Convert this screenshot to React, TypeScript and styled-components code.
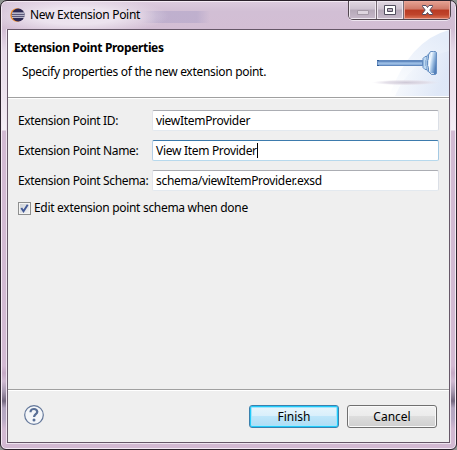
import React from "react";
import styled, { createGlobalStyle } from "styled-components";

const GlobalStyle = createGlobalStyle`
  * { box-sizing: border-box; }
  body { margin: 0; background: #8d938f; overflow: hidden; }
`;

const Window = styled.div`
  width: 457px;
  height: 450px;
  display: flex;
  flex-direction: column;
  padding: 0 6px 6px;
  border: 1px solid #2b222c;
  border-radius: 7px 7px 6px 6px;
  box-shadow: inset 0 0 0 1px #f4eaf4;
  background: linear-gradient(180deg, #dccbdd 0, #d2bdd4 28px, #e6dae8 50px, #eee5ef 100px, #f4eef5 129px, #d2bad3 130px, #d3bad3 365px, #c5a9c5 372px, #d0bad2 380px, #a99ab2 390px, #74677f 400px, #b3a5c0 407px, #b8a9c4 418px, #d2b9d2 428px, #d2b9d2 100%);
  font-family: "Noto Sans", "Open Sans", sans-serif;
  font-size: 12px;
  color: #000;
`;

const TitleBar = styled.header`
  position: relative;
  height: 27px;
  flex: none;
  display: flex;
  align-items: flex-start;
  margin: 1px -5px 0;
  padding-left: 8px;
  border-radius: 5px 5px 0 0;
  background:
    radial-gradient(ellipse 92px 19px at 75px 14px, rgba(239, 231, 241, 0.9) 45%, transparent 100%),
    linear-gradient(90deg, transparent 138px, rgba(181, 168, 202, 0.65) 154px 195px, transparent 208px) 0 9px / 100% 12px no-repeat,
    linear-gradient(180deg, #dccbde, #d2bfd5 35%, #d3bed4);
`;

const AppIcon = styled.svg`
  width: 15px;
  height: 14px;
  margin-top: 6px;
`;

const Text = styled.span<{ $tracking?: number }>`
  display: inline-block;
  line-height: 16px;
  white-space: pre;
  letter-spacing: ${({ $tracking = 0 }) => $tracking}px;
`;

const Title = styled(Text)`
  margin: 5px 0 0 5px;
`;

const WindowControls = styled.div`
  display: flex;
  height: 19px;
  margin: -1px 4px 0 auto;
  border: 1px solid #51464f;
  border-top: 0;
  border-radius: 0 0 5px 5px;
  overflow: hidden;
  box-shadow: 0 1px 0 #eee5f0;
`;

const ControlButton = styled.button<{ $width: number; $close?: boolean }>`
  width: ${({ $width }) => $width}px;
  height: 18px;
  padding: 0;
  display: flex;
  justify-content: center;
  border: 0;
  border-right: ${({ $close }) => ($close ? "0" : "1px solid #766b75")};
  box-shadow: inset 0 0 0 1px ${({ $close }) => ($close ? "#e9a396" : "#eee7ef")};
  background: ${({ $close }) =>
    $close
      ? "linear-gradient(180deg, #e5a394 0, #cf7968 45%, #b93a22 50%, #bf442b 75%, #dc7658 100%)"
      : "linear-gradient(180deg, #e1d8e2 0, #cdc2cf 45%, #b5a8b8 50%, #c7b9ca 100%)"};

  svg { width: 16px; height: 18px; }
`;

const Client = styled.main`
  flex: 1;
  min-height: 0;
  display: flex;
  flex-direction: column;
  border: 1px solid #665768;
  background: #efefef;
  box-shadow: 0 0 0 1px #eee4ef;
`;

const Banner = styled.section`
  height: 68px;
  flex: none;
  display: flex;
  justify-content: space-between;
  background: #fff;
  border-bottom: 1px solid #a0a0a0;
  box-shadow: 0 1px 0 #fff;
`;

const BannerCopy = styled.div`
  display: flex;
  flex-direction: column;
  padding: 10px 0 0 6px;
`;

const Heading = styled(Text)`
  font-weight: 700;
`;

const Description = styled(Text)`
  margin: 8px 0 0 8px;
`;

const PlungerArt = styled.svg`
  width: 85px;
  height: 66px;
  display: block;
`;

const Form = styled.section`
  flex: 1;
  padding: 12px 10px 0;
`;

const Field = styled.label`
  display: grid;
  grid-template-columns: 134px 287px;
  align-items: center;
  height: 21px;
  margin-bottom: 9px;
`;

const InputBox = styled.div<{ $focused?: boolean }>`
  height: 21px;
  padding: 2px 3px;
  display: flex;
  border: 1px solid;
  border-radius: 2px;
  border-color: ${({ $focused }) =>
    $focused ? "#3d7bad #a4c9e3 #b7d9ed #b5cfe7" : "#abadb3 #dbdfe6 #e3e9ef #e2e3ea"};
  background: #fff;
`;

const Caret = styled.i`
  width: 1px;
  height: 15px;
  background: #000;
`;

const CheckRow = styled.label`
  display: flex;
  align-items: center;
  height: 16px;
`;

const CheckBox = styled.span`
  width: 13px;
  height: 13px;
  margin-right: 3px;
  border: 1px solid #8e8f8f;
  background: linear-gradient(135deg, #cbcfd5, #f6f6f6);
  box-shadow: inset 0 0 0 1px #f4f4f4;

  svg { display: block; width: 11px; height: 11px; }
`;

const Footer = styled.footer`
  height: 53px;
  flex: none;
  display: flex;
  align-items: flex-start;
  gap: 8px;
  padding: 15px 12px 0 16px;
  border-top: 1px solid #a0a0a0;
  box-shadow: inset 0 1px 0 #fff;
`;

const HelpIcon = styled.svg`
  width: 20px;
  height: 20px;
  margin-right: auto;
`;

const ActionButton = styled.button<{ $primary?: boolean }>`
  width: 90px;
  height: 23px;
  padding: 0 0 1px;
  border: 1px solid ${({ $primary }) => ($primary ? "#3b80ad" : "#707070")};
  border-radius: 3px;
  color: #000;
  font: inherit;
  box-shadow: ${({ $primary }) =>
    $primary ? "inset 0 0 0 1px #20cbfa, inset 0 0 0 2px #a3e5fc" : "inset 0 0 0 1px #fafafa"};
  background: ${({ $primary }) =>
    $primary
      ? "linear-gradient(180deg, #e8f5fc 0, #d8effb 48%, #bee6fa 50%, #addcf4 100%)"
      : "linear-gradient(180deg, #f2f2f2 0, #ebebeb 48%, #dddddd 50%, #cfcfcf 100%)"};
`;

const EclipseLogo = () => (
  <AppIcon viewBox="0 0 15 14">
    <circle cx="7" cy="7" r="6.7" fill="#ed8b2b" />
    <circle cx="8.2" cy="7" r="6.5" fill="#2c2853" />
    <path d="M2 5.1h12.4M1.7 7.2h13M2 9.3h12.4" stroke="#e5e4f1" strokeWidth="1.1" />
  </AppIcon>
);

const Plunger = () => (
  <PlungerArt viewBox="0 0 85 66">
    <defs>
      <linearGradient id="sky" x1="0" y1="0" x2="1" y2="0.4">
        <stop offset="0" stopColor="#fff" />
        <stop offset="1" stopColor="#dae4f6" />
      </linearGradient>
      <linearGradient id="skyTop" x1="0" y1="1" x2="0.7" y2="0">
        <stop offset="0" stopColor="#fff" />
        <stop offset="1" stopColor="#e4ecf9" />
      </linearGradient>
      <linearGradient id="cup" x1="0" y1="0" x2="1" y2="0.5">
        <stop offset="0" stopColor="#9bbce0" />
        <stop offset="0.4" stopColor="#eef7ff" />
        <stop offset="0.65" stopColor="#a5c5e6" />
        <stop offset="1" stopColor="#527fb9" />
      </linearGradient>
      <radialGradient id="shadow">
        <stop offset="0" stopColor="#cfc9d7" />
        <stop offset="0.6" stopColor="#ded9e4" stopOpacity="0.8" />
        <stop offset="1" stopColor="#e8e4ee" stopOpacity="0" />
      </radialGradient>
    </defs>
    <path d="M85 0Q46 10 25 66H85Z" fill="url(#skyTop)" />
    <path d="M85 21Q46 30 31 66H85Z" fill="url(#sky)" opacity="0.8" />
    <ellipse cx="42" cy="52.5" rx="34" ry="2.8" fill="url(#shadow)" />
    <rect x="13.5" y="30.5" width="45" height="5" fill="#8aaedb" stroke="#6088be" />
    <path d="M14 31.5h44" stroke="#638bc0" />
    <path d="M14 33.5h44" stroke="#9bbde3" />
    <path d="M13 30h2v1h-2zM13 35h2v1h-2z" fill="#315d96" />
    <path d="M63 26.5h-2l-2 2v9l2 2h2" fill="#bcd8f2" stroke="#668fc2" />
    <path d="M67 22.5l-4 3v4l-1 1v5l1 1v4l4 3" fill="#dceeff" stroke="#668fc2" />
    <path d="M69.500 21.500h2l1 1v21l-1 1h-4l-3-3v-4l-1-2v-5l1-2v-4l2-3z" fill="url(#cup)" stroke="#668fc2" />
    <path d="M65.500 25v16M67 43.500h3" stroke="#fff" opacity="0.65" />
  </PlungerArt>
);

const fields = [
  { label: "Extension Point ID:", labelTracking: -0.35, value: "viewItemProvider", tracking: -0.3 },
  { label: "Extension Point Name:", labelTracking: -0.35, value: "View Item Provider", tracking: -0.3, focused: true },
  { label: "Extension Point Schema:", labelTracking: -0.35, value: "schema/viewItemProvider.exsd", tracking: -0.3 },
];

export default function App() {
  return (
    <>
      <GlobalStyle />
      <Window>
        <TitleBar>
          <EclipseLogo />
          <Title $tracking={-0.3}>New Extension Point</Title>
          <WindowControls>
            <ControlButton $width={28} aria-label="Minimize">
              <svg viewBox="0 0 16 18"><path d="M2.500 9.500h11v4h-11z" fill="#ded5df" stroke="#a499a6" /></svg>
            </ControlButton>
            <ControlButton $width={27} aria-label="Maximize">
              <svg viewBox="0 0 16 18"><path d="M2.500 4.500h11v9h-11zM5.500 7.500v3h5v-3z" fill="#fff" fillRule="evenodd" stroke="#514e5e" /></svg>
            </ControlButton>
            <ControlButton $width={46} $close aria-label="Close">
              <svg viewBox="0 0 16 18"><path d="M3.500 4.500h3.500l1.500 2 1.500-2h3.500v1l-2.700 3.500 2.700 3.500v1H10l-1.500-2-1.500 2H3.500v-1L6.200 9 3.500 5.500z" fill="#fff" stroke="#514b61" /></svg>
            </ControlButton>
          </WindowControls>
        </TitleBar>
        <Client>
          <Banner>
            <BannerCopy>
              <Heading $tracking={-0.35}>Extension Point Properties</Heading>
              <Description $tracking={-0.3}>Specify properties of the new extension point.</Description>
            </BannerCopy>
            <Plunger />
          </Banner>
          <Form>
            {fields.map((f) => (
              <Field key={f.label}>
                <Text $tracking={f.labelTracking}>{f.label}</Text>
                <InputBox $focused={f.focused}>
                  <Text $tracking={f.tracking}>{f.value}</Text>
                  {f.focused && <Caret />}
                </InputBox>
              </Field>
            ))}
            <CheckRow>
              <CheckBox>
                <svg viewBox="0 0 11 11"><path d="M2.300 5l2.200 3.300L8.700 1.700" fill="none" stroke="#415896" strokeWidth="1.900" /></svg>
              </CheckBox>
              <Text $tracking={-0.3}>Edit extension point schema when done</Text>
            </CheckRow>
          </Form>
          <Footer>
            <HelpIcon viewBox="0 0 20 20">
              <circle cx="10" cy="10" r="9.300" fill="#f4f6f9" stroke="#63779a" strokeWidth="1.200" />
              <path d="M6.600 7.300V6.200Q7.200 4 10 4t3.300 2.700c0 2.500-3.200 2.500-3.200 5.300" fill="none" stroke="#586e96" strokeWidth="2.200" />
              <circle cx="10" cy="15" r="1.500" fill="#586e96" />
            </HelpIcon>
            <ActionButton $primary><Text>Finish</Text></ActionButton>
            <ActionButton><Text>Cancel</Text></ActionButton>
          </Footer>
        </Client>
      </Window>
    </>
  );
}
